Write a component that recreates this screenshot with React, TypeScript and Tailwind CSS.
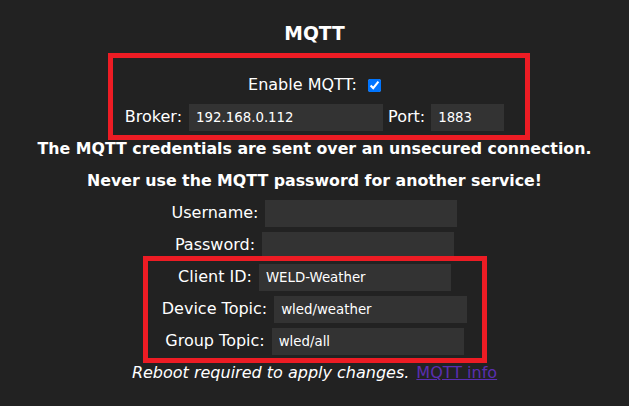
import React from 'react';

const Field: React.FC<{ label: string; value?: string; type?: string; width?: string }> = ({
  label,
  value = '',
  type = 'text',
  width = 'w-[192px]',
}) => (
  <>
    <span>{label}</span>
    <input
      type={type}
      defaultValue={value}
      className={`ml-[7px] h-[27px] ${width} bg-[#333] px-[7px] text-[13.33px] text-white outline-none`}
    />
  </>
);

const Row: React.FC<{ children: React.ReactNode }> = ({ children }) => (
  <div className="flex h-8 items-center justify-center whitespace-nowrap">{children}</div>
);

const App: React.FC = () => {
  return (
    <div
      className="relative h-[406px] w-full overflow-hidden bg-[#222] text-[16px] text-white"
      style={{ fontFamily: '"DejaVu Sans", Verdana, sans-serif' }}
    >
      <div className="flex h-[69px] items-center justify-center">
        <h3 className="text-[18.7px] font-bold">MQTT</h3>
      </div>

      <Row>
        <span>Enable MQTT:</span>
        <input type="checkbox" defaultChecked className="ml-[11px] h-[13px] w-[13px] accent-[#0075ff]" />
      </Row>
      <Row>
        <Field label="Broker:" value="192.168.0.112" width="w-[194px]" />
        <span className="ml-[5px]">Port:</span>
        <input
          type="text"
          defaultValue="1883"
          className="ml-[6px] h-[27px] w-[73px] bg-[#333] px-[7px] text-[13.33px] text-white outline-none"
        />
      </Row>
      <Row>
        <b className="text-[15.8px]">The MQTT credentials are sent over an unsecured connection.</b>
      </Row>
      <Row>
        <b className="text-[15.8px]">Never use the MQTT password for another service!</b>
      </Row>
      <Row>
        <Field label="Username:" />
      </Row>
      <Row>
        <Field label="Password:" type="password" />
      </Row>
      <Row>
        <Field label="Client ID:" value="WELD-Weather" />
      </Row>
      <Row>
        <Field label="Device Topic:" value="wled/weather" width="w-[193px]" />
      </Row>
      <Row>
        <Field label="Group Topic:" value="wled/all" />
      </Row>
      <Row>
        <i>Reboot required to apply changes.</i>
        <a href="#" className="ml-[7px] text-[#5a2fb0] underline">
          MQTT info
        </a>
      </Row>

      {/* annotation boxes */}
      <div className="pointer-events-none absolute left-[108px] top-[53px] h-[87px] w-[422px] border-[5px] border-[#ed1c24]" />
      <div className="pointer-events-none absolute left-[143px] top-[256px] h-[107px] w-[344px] border-[5px] border-[#ed1c24]" />
    </div>
  );
};

export default App;
